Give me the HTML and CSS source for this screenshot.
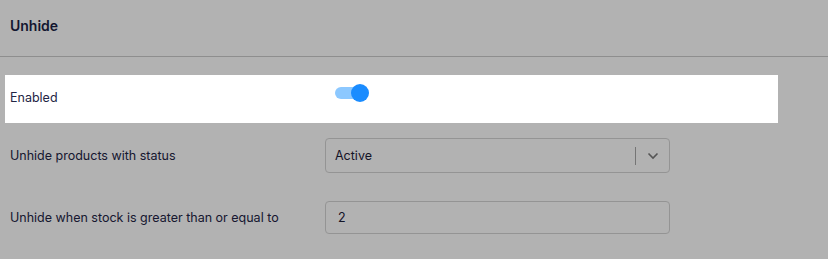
FILE: index.html
```html
<!DOCTYPE html>
<html>
<head>
<meta charset="utf-8">
<link rel="stylesheet" href="styles.css">
</head>
<body>
<div class="panel">
  <div class="panel-header">Unhide</div>
  <div class="panel-body">
    <div class="row row-spot">
      <div class="label">Enabled</div>
      <div class="control">
        <span class="toggle"><span class="track"></span><span class="knob"></span></span>
      </div>
    </div>
    <div class="row row-field">
      <div class="label">Unhide products with status</div>
      <div class="control">
        <div class="select">
          <span class="select-value">Active</span>
          <span class="select-sep"></span>
          <span class="select-arrow">
            <svg width="12" height="8" viewBox="0 0 12 8"><path d="M1.5 1.5 L6 6 L10.5 1.5" fill="none" stroke="#7a7a7a" stroke-width="1.6"/></svg>
          </span>
        </div>
      </div>
    </div>
    <div class="row row-field">
      <div class="label">Unhide when stock is greater than or equal to</div>
      <div class="control">
        <div class="input">2</div>
      </div>
    </div>
  </div>
</div>
</body>
</html>
```

FILE: styles.css
```css
html, body {
  margin: 0;
  padding: 0;
  background: #ffffff;
  overflow: hidden;
}
body {
  width: 828px;
  height: 259px;
  font-family: Inter, "Noto Sans", sans-serif;
  color: #232545;
}
.panel-header {
  height: 57px;
  box-sizing: border-box;
  padding: 17px 0 0 10px;
  font-size: 14px;
  line-height: 17px;
  font-weight: 600;
  color: #1c1f45;
  border-bottom: 1px solid #cccccc;
}
.panel-body {
  padding-top: 18px;
  display: flex;
  flex-direction: column;
}
.row {
  display: flex;
  align-items: center;
  font-size: 12.5px;
}
.label {
  width: 315px;
  flex: none;
}
.row-spot {
  position: relative;
  z-index: 2;
  background: #ffffff;
  margin: 0 50px 0 5px;
  padding: 0 5px;
  height: 48px;
  box-shadow: 0 0 0 3000px rgba(0, 0, 0, 0.3);
}
.row-spot .label {
  margin-top: -4px;
}
.row-field {
  padding-left: 10px;
  margin-top: 15px;
}
.row-field + .row-field {
  margin-top: 28px;
}
.toggle {
  position: relative;
  display: block;
  width: 35px;
  height: 18px;
  margin-left: 10px;
  margin-top: -13px;
}
.track {
  position: absolute;
  left: 0;
  top: 3px;
  width: 32px;
  height: 12px;
  border-radius: 6px;
  background: #8cc8ff;
}
.knob {
  position: absolute;
  left: 16px;
  top: 0;
  width: 18px;
  height: 18px;
  border-radius: 50%;
  background: #1a8cff;
}
.select, .input {
  width: 345px;
  box-sizing: border-box;
  border: 1px solid #d5d5d5;
  border-radius: 4px;
  background: #ffffff;
  font-size: 12.5px;
  color: #1e2038;
}
.select {
  height: 35px;
  display: flex;
  align-items: center;
  padding-left: 9px;
}
.select-value {
  flex: 1;
}
.select-sep {
  width: 1px;
  height: 18px;
  background: #a8a8a8;
}
.select-arrow {
  width: 33px;
  display: flex;
  justify-content: center;
  align-items: center;
}
.input {
  height: 33px;
  display: flex;
  align-items: center;
  padding-left: 12px;
}
```
